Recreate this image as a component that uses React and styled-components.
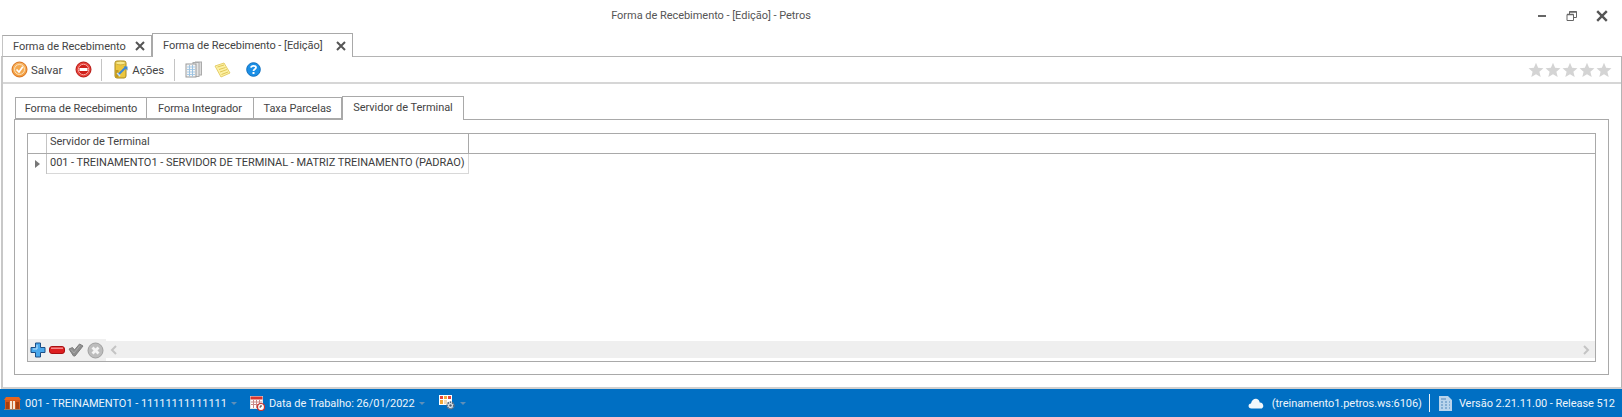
import React from 'react';
import styled, {createGlobalStyle} from 'styled-components';

const Global = createGlobalStyle`
  html, body { margin: 0; padding: 0; background: #fff; overflow: hidden; }
  body { font-family: Roboto, "Open Sans", sans-serif; font-size: 11px; letter-spacing: -0.04px; color: #444; }
`;

const Page = styled.div`
  width: 1622px;
  height: 417px;
  display: flex;
  flex-direction: column;
`;

const TitleBar = styled.div`
  height: 33px;
  flex: none;
  position: relative;
  display: flex;
  align-items: flex-start;
  justify-content: center;
  padding: 7px 200px 0 0;
  box-sizing: border-box;
  color: #555;
  line-height: 18px;
`;

const WindowButtons = styled.div`
  position: absolute;
  right: 14px;
  top: 10px;
  display: flex;
  gap: 18px;
`;

const DocTabs = styled.div`
  height: 23px;
  flex: none;
  display: flex;
  align-items: flex-end;
  padding-left: 2px;
`;

const DocTab = styled.div`
  box-sizing: border-box;
  height: ${p => p.active ? 24 : 21}px;
  width: ${p => p.width}px;
  margin-bottom: ${p => p.active ? -1 : 0}px;
  border: 1px solid #a9a9a9;
  border-bottom: none;
  border-left: ${p => p.active ? '1px solid #a9a9a9' : '1px solid #c4c4c4'};
  background: #fff;
  display: flex;
  align-items: center;
  justify-content: space-between;
  padding: 0 6px 0 10px;
  color: #444;
  white-space: nowrap;
  position: relative;
  z-index: ${p => p.active ? 1 : 0};
`;

const Panel = styled.div`
  flex: 1;
  min-height: 0;
  box-sizing: border-box;
  margin-left: 1px;
  border: 1px solid #b4b4b4;
  border-bottom: 2px solid #d0d0d0;
  border-left: 2px solid #c8c8c8;
  display: flex;
  flex-direction: column;
`;

const Toolbar = styled.div`
  height: 27px;
  flex: none;
  box-sizing: border-box;
  border-bottom: 2px solid #d6d6d6;
  display: flex;
  align-items: center;
  padding-left: 8px;
`;

const ToolButton = styled.div`
  display: flex;
  align-items: center;
  gap: 3px;
  margin-right: ${p => p.gap || 0}px;
  color: #444;
  font-size: 11.5px;
`;

const ToolSep = styled.div`
  width: 1px;
  height: 22px;
  background: #c4c4c4;
  margin-right: ${p => p.gap || 0}px;
`;

const Rating = styled.div`
  margin-left: auto;
  margin-right: 9px;
  display: flex;
  gap: 1px;
`;

const PanelBody = styled.div`
  flex: 1;
  min-height: 0;
  display: flex;
  flex-direction: column;
  padding: 11px 12px 12px 11px;
`;

const InnerTabs = styled.div`
  height: 24px;
  flex: none;
  display: flex;
  align-items: flex-end;
  padding-left: 1px;
`;

const InnerTab = styled.div`
  box-sizing: border-box;
  width: ${p => p.width}px;
  height: ${p => p.active ? 24 : 22}px;
  margin-bottom: ${p => p.active ? -1 : 0}px;
  padding-bottom: ${p => p.active ? 3 : 0}px;
  border: 1px solid #a9a9a9;
  border-bottom: ${p => p.active ? 'none' : '1px solid #a9a9a9'};
  border-left: ${p => p.first || p.active ? '1px solid #a9a9a9' : 'none'};
  background: #fff;
  display: flex;
  align-items: center;
  justify-content: center;
  color: #444;
  white-space: nowrap;
  position: relative;
  z-index: ${p => p.active ? 1 : 0};
`;

const TabPage = styled.div`
  flex: 1;
  min-height: 0;
  border: 1px solid #a9a9a9;
  padding: 13px 12px 12px 12px;
  display: flex;
`;

const Grid = styled.div`
  flex: 1;
  border: 1px solid #a9a9a9;
  display: flex;
  flex-direction: column;
`;

const HeaderRow = styled.div`
  height: 19px;
  flex: none;
  display: flex;
  border-bottom: 1px solid #a9a9a9;
`;

const Indicator = styled.div`
  width: 18px;
  flex: none;
  border-right: 1px solid #c4c4c4;
  display: flex;
  align-items: center;
  justify-content: center;
`;

const HeaderCell = styled.div`
  width: 418px;
  padding-left: 3px;
  border-right: 1px solid #a9a9a9;
  line-height: 16px;
  color: #444;
  white-space: nowrap;
`;

const DataRow = styled.div`
  height: 20px;
  flex: none;
  display: flex;
`;

const DataCell = styled(HeaderCell)`
  border-right: 1px solid #d8d8d8;
  border-bottom: 1px solid #d8d8d8;
  line-height: 17px;
  color: #3c3c3c;
`;

const GridSpace = styled.div`
  flex: 1;
`;

const GridFooter = styled.div`
  height: 17px;
  flex: none;
  display: flex;
  margin-bottom: 3px;
`;

const Navigator = styled.div`
  width: 78px;
  flex: none;
  height: 22px;
  margin-top: -2px;
  background: #efefef;
  display: flex;
  align-items: center;
  gap: 3px;
  padding-left: 2px;
  box-sizing: border-box;
`;

const ScrollTrack = styled.div`
  flex: 1;
  background: #efefef;
  display: flex;
  align-items: center;
  justify-content: space-between;
  padding: 0 5px 0 4px;
`;

const StatusBar = styled.div`
  height: 28px;
  flex: none;
  background: #006fc3;
  color: #eef5fb;
  display: flex;
  align-items: center;
  padding: 0 7px 0 4px;
`;

const StatusItem = styled.div`
  display: flex;
  align-items: center;
  gap: ${p => p.inner || 4}px;
  margin-right: ${p => p.gap || 0}px;
  white-space: nowrap;
`;

const Caret = styled.span`
  width: 0;
  height: 0;
  border-left: 3px solid transparent;
  border-right: 3px solid transparent;
  border-top: 3px solid #5f8fb8;
`;

const StatusSep = styled.div`
  width: 1px;
  height: 18px;
  background: #e6f0f8;
  margin: 0 9px 0 7px;
`;

const Spacer = styled.div`
  flex: 1;
`;

function CloseX({size = 10}) {
  return (
    <svg width={size} height={size} viewBox="0 0 10 10">
      <path d="M1 1L9 9M9 1L1 9" stroke="#555" strokeWidth="2" />
    </svg>
  );
}

function SaveIcon() {
  return (
    <svg width="17" height="17" viewBox="0 0 17 17">
      <defs>
        <radialGradient id="sv" cx="50%" cy="40%" r="60%">
          <stop offset="0" stopColor="#ffd9a0" />
          <stop offset="1" stopColor="#f0942e" />
        </radialGradient>
      </defs>
      <circle cx="8.5" cy="8.5" r="7.5" fill="url(#sv)" stroke="#d9711c" />
      <circle cx="8.5" cy="8.5" r="5" fill="#f5a94f" stroke="#fbe0bb" />
      <path d="M5.500 8.500L8 11L11.800 5.800" stroke="#fff" strokeWidth="1.700" fill="none" />
    </svg>
  );
}

function CancelIcon() {
  return (
    <svg width="17" height="17" viewBox="0 0 17 17">
      <circle cx="8.5" cy="8.5" r="7.5" fill="#e8433b" stroke="#b5140f" />
      <circle cx="8.5" cy="8.5" r="5.200" fill="#cf1f1a" stroke="#f6a7a0" />
      <rect x="4.500" y="7" width="8" height="3" fill="#fff" />
    </svg>
  );
}

function ActionsIcon() {
  return (
    <svg width="16" height="20" viewBox="0 0 16 20">
      <rect x="2" y="1" width="11" height="17" rx="2" fill="#ecc63f" stroke="#a98a1f" />
      <ellipse cx="7.500" cy="3" rx="5" ry="1.800" fill="#f9e98a" stroke="#b99a2a" strokeWidth=".6" />
      <rect x="2.500" y="10" width="3" height="7.500" fill="#c49a1e" />
      <path d="M5 15L13 7" stroke="#3b87d6" strokeWidth="2" />
      <path d="M10.500 6.500H14.500V10.500Z" fill="#3b87d6" />
      <path d="M4 13L7 16" stroke="#cfe3f6" strokeWidth="1.400" />
    </svg>
  );
}

function GridPagesIcon() {
  return (
    <svg width="17" height="17" viewBox="0 0 17 17">
      <rect x="10.500" y="1" width="6" height="13" fill="#dcdcdc" stroke="#aaa" />
      <rect x="8" y="1.500" width="6" height="14" fill="#e6e6e6" stroke="#aaa" />
      <rect x="1" y="3" width="10" height="13" fill="#f6f6f6" stroke="#999" />
      <path d="M2 6H10M2 8.500H10M2 11H10M2 13.500H10" stroke="#a6cdec" />
      <path d="M4.500 4V15.500M7.500 4V15.500" stroke="#9fc2de" />
    </svg>
  );
}

function NoteIcon() {
  return (
    <svg width="17" height="16" viewBox="0 0 17 16">
      <path d="M1 4L10 1L16 11L7 15Z" fill="#fdf1a4" stroke="#e6cf6c" />
      <path d="M3.500 5L10 3M5 7.500L11.500 5.500M6 10L13 7.500M7.500 12.500L14 10" stroke="#e0c658" />
    </svg>
  );
}

function HelpIcon() {
  return (
    <svg width="15" height="15" viewBox="0 0 15 15">
      <circle cx="7.500" cy="7.500" r="6.800" fill="#1b8fe6" stroke="#0f6fbe" />
      <path d="M5 5.600C5.300 3.200 10 3.200 10 5.600C10 7.400 7.500 7.200 7.500 9" stroke="#fff" strokeWidth="1.800" fill="none" />
      <rect x="6.500" y="10" width="2" height="2" fill="#fff" />
    </svg>
  );
}

function Star() {
  return (
    <svg width="16" height="16" viewBox="0 0 16 16">
      <path d="M8 .8L10.100 5.800L15.500 6.200L11.400 9.700L12.700 15L8 12.200L3.300 15L4.600 9.700L.5 6.200L5.900 5.800Z" fill="#d4d4d4" />
    </svg>
  );
}

function PlusIcon() {
  return (
    <svg width="16" height="16" viewBox="0 0 16 16">
      <path d="M5.500 1H10.500V5.500H15V10.500H10.500V15H5.500V10.500H1V5.500H5.500Z" fill="#4aa8ec" stroke="#1c4f86" />
      <path d="M7 3V7H3" stroke="#bfe2fa" fill="none" />
    </svg>
  );
}

function MinusIcon() {
  return (
    <svg width="16" height="8" viewBox="0 0 16 8">
      <rect x=".5" y=".5" width="15" height="7" rx="2.500" fill="#dd1e20" stroke="#a81012" />
      <rect x="2" y="1.500" width="12" height="1.500" fill="#f4898a" />
    </svg>
  );
}

function CheckGrey() {
  return (
    <svg width="16" height="14" viewBox="0 0 16 14">
      <path d="M1 6L4.500 4.500L6.500 7L11.500 1L15 3L7 13H5.500Z" fill="#8e8e8e" stroke="#7c7c7c" />
      <path d="M3 6.500L6 10L12 2.500" stroke="#a9a9a9" fill="none" />
    </svg>
  );
}

function CancelGrey() {
  return (
    <svg width="17" height="17" viewBox="0 0 17 17">
      <circle cx="8.500" cy="8.500" r="7.500" fill="#bcbcbc" stroke="#a0a0a0" />
      <path d="M5.500 5.500L11.500 11.500M11.500 5.500L5.500 11.500" stroke="#f3f3f3" strokeWidth="2.800" />
    </svg>
  );
}

function ScrollArrow({dir}) {
  return (
    <svg width="8" height="10" viewBox="0 0 8 10">
      <path d={dir === 'left' ? 'M6 1L2 5L6 9' : 'M2 1L6 5L2 9'} stroke="#c4c4c4" strokeWidth="2" fill="none" />
    </svg>
  );
}

function StoreIcon() {
  return (
    <svg width="17" height="13" viewBox="0 0 17 13">
      <path d="M2 0H15L17 3H0Z" fill="#e8651f" />
      <rect x="1" y="3" width="15" height="9" fill="#d4571a" />
      <rect x="2" y="5" width="3" height="7" fill="#a5400f" />
      <rect x="12" y="5" width="3" height="7" fill="#a5400f" />
      <rect x="6" y="4" width="5" height="8" fill="#f6e7d4" />
      <rect x="8" y="4" width="1" height="8" fill="#c46a35" />
      <rect x="0" y="12" width="17" height="1" fill="#8f7f70" />
    </svg>
  );
}

function CalendarIcon() {
  return (
    <svg width="15" height="15" viewBox="0 0 15 15">
      <rect x=".5" y=".5" width="12" height="12" fill="#fff" stroke="#e4e4e4" />
      <rect x=".5" y=".5" width="12" height="3" fill="#d8342e" />
      <path d="M1 6H12M1 8.500H12M3.500 4V12M6.500 4V12M9.500 4V12" stroke="#c98886" />
      <circle cx="11" cy="11" r="3.500" fill="#fff" stroke="#c9302c" strokeWidth="1.200" />
      <path d="M11 9V11H9.500" stroke="#333" fill="none" />
    </svg>
  );
}

function TableGearIcon() {
  return (
    <svg width="17" height="16" viewBox="0 0 17 16">
      <rect x="0" y="0" width="13" height="10" fill="#fff" />
      <rect x="1" y="1" width="3" height="3" fill="#e8463c" />
      <rect x="5" y="1" width="3" height="3" fill="#f2a93a" />
      <rect x="9" y="1" width="3" height="3" fill="#e8463c" />
      <rect x="1" y="5" width="3" height="4" fill="#f2a93a" />
      <rect x="5" y="5" width="3" height="4" fill="#f0d9b8" />
      <circle cx="11.500" cy="10.500" r="3.300" fill="#dfe7ee" stroke="#5a6b7d" strokeWidth="1.800" strokeDasharray="1.600 .8" />
      <circle cx="11.500" cy="10.500" r="1.200" fill="#4f6072" />
    </svg>
  );
}

function CloudIcon() {
  return (
    <svg width="16" height="11" viewBox="0 0 16 11">
      <path d="M3.500 10.500C-.3 10.500 -.3 5.800 3 5.500C3.500 2.500 6 .5 8.300 .8C10.300 1 11.500 3 11.700 4.500C15.800 4.300 16.800 10.500 12.500 10.500Z" fill="#f2f7fb" />
    </svg>
  );
}

function DocIcon() {
  return (
    <svg width="13" height="15" viewBox="0 0 13 15">
      <path d="M0 0H9L13 4V15H0Z" fill="#b9d4ec" />
      <path d="M2 3H7M2 6H4M6 6H8M10 6H11M2 9H4M6 9H8M10 9H11M2 12H4M6 12H8M10 12H11" stroke="#4d86bb" />
    </svg>
  );
}

export default function App() {
  return (
    <Page>
      <Global />
      <TitleBar>
        Forma de Recebimento - [Edição] - Petros
        <WindowButtons>
          <svg width="12" height="12" viewBox="0 0 12 12"><rect x="2" y="5" width="8" height="2" fill="#666" /></svg>
          <svg width="12" height="12" viewBox="0 0 12 12"><path d="M1 4.500H7.500V10.500H1ZM3.500 4V1.500H10.500V7.500H8" fill="none" stroke="#666" /><path d="M1 4.500H7.500M3.500 2H10.500" stroke="#666" strokeWidth="1.500" /></svg>
          <CloseX size={12} />
        </WindowButtons>
      </TitleBar>
      <DocTabs>
        <DocTab width={150}>Forma de Recebimento <CloseX /></DocTab>
        <DocTab active width={201}>Forma de Recebimento - [Edição] <CloseX /></DocTab>
      </DocTabs>
      <Panel>
        <Toolbar>
          <ToolButton gap={13}><SaveIcon />Salvar</ToolButton>
          <ToolButton gap={9}><CancelIcon /></ToolButton>
          <ToolSep gap={11} />
          <ToolButton gap={10}><ActionsIcon />Ações</ToolButton>
          <ToolSep gap={10} />
          <ToolButton gap={12}><GridPagesIcon /></ToolButton>
          <ToolButton gap={15}><NoteIcon /></ToolButton>
          <ToolButton><HelpIcon /></ToolButton>
          <Rating><Star /><Star /><Star /><Star /><Star /></Rating>
        </Toolbar>
        <PanelBody>
          <InnerTabs>
            <InnerTab first width={132}>Forma de Recebimento</InnerTab>
            <InnerTab width={107}>Forma Integrador</InnerTab>
            <InnerTab width={88}>Taxa Parcelas</InnerTab>
            <InnerTab active width={122}>Servidor de Terminal</InnerTab>
          </InnerTabs>
          <TabPage>
            <Grid>
              <HeaderRow>
                <Indicator />
                <HeaderCell>Servidor de Terminal</HeaderCell>
              </HeaderRow>
              <DataRow>
                <Indicator>
                  <svg width="5" height="8" viewBox="0 0 5 8"><path d="M0 0L5 4L0 8Z" fill="#777" /></svg>
                </Indicator>
                <DataCell>001 - TREINAMENTO1 - SERVIDOR DE TERMINAL - MATRIZ TREINAMENTO (PADRAO)</DataCell>
              </DataRow>
              <GridSpace />
              <GridFooter>
                <Navigator>
                  <PlusIcon /><MinusIcon /><CheckGrey /><CancelGrey />
                </Navigator>
                <ScrollTrack>
                  <ScrollArrow dir="left" />
                  <ScrollArrow dir="right" />
                </ScrollTrack>
              </GridFooter>
            </Grid>
          </TabPage>
        </PanelBody>
      </Panel>
      <StatusBar>
        <StatusItem gap={13}><StoreIcon />001 - TREINAMENTO1 - 11111111111111 <Caret /></StatusItem>
        <StatusItem gap={14}><CalendarIcon />Data de Trabalho: 26/01/2022 <Caret /></StatusItem>
        <StatusItem><TableGearIcon /><Caret /></StatusItem>
        <Spacer />
        <StatusItem inner={8}><CloudIcon /> (treinamento1.petros.ws:6106)</StatusItem>
        <StatusSep />
        <StatusItem inner={7}><DocIcon /> Versão 2.21.11.00 - Release 512</StatusItem>
      </StatusBar>
    </Page>
  );
}
